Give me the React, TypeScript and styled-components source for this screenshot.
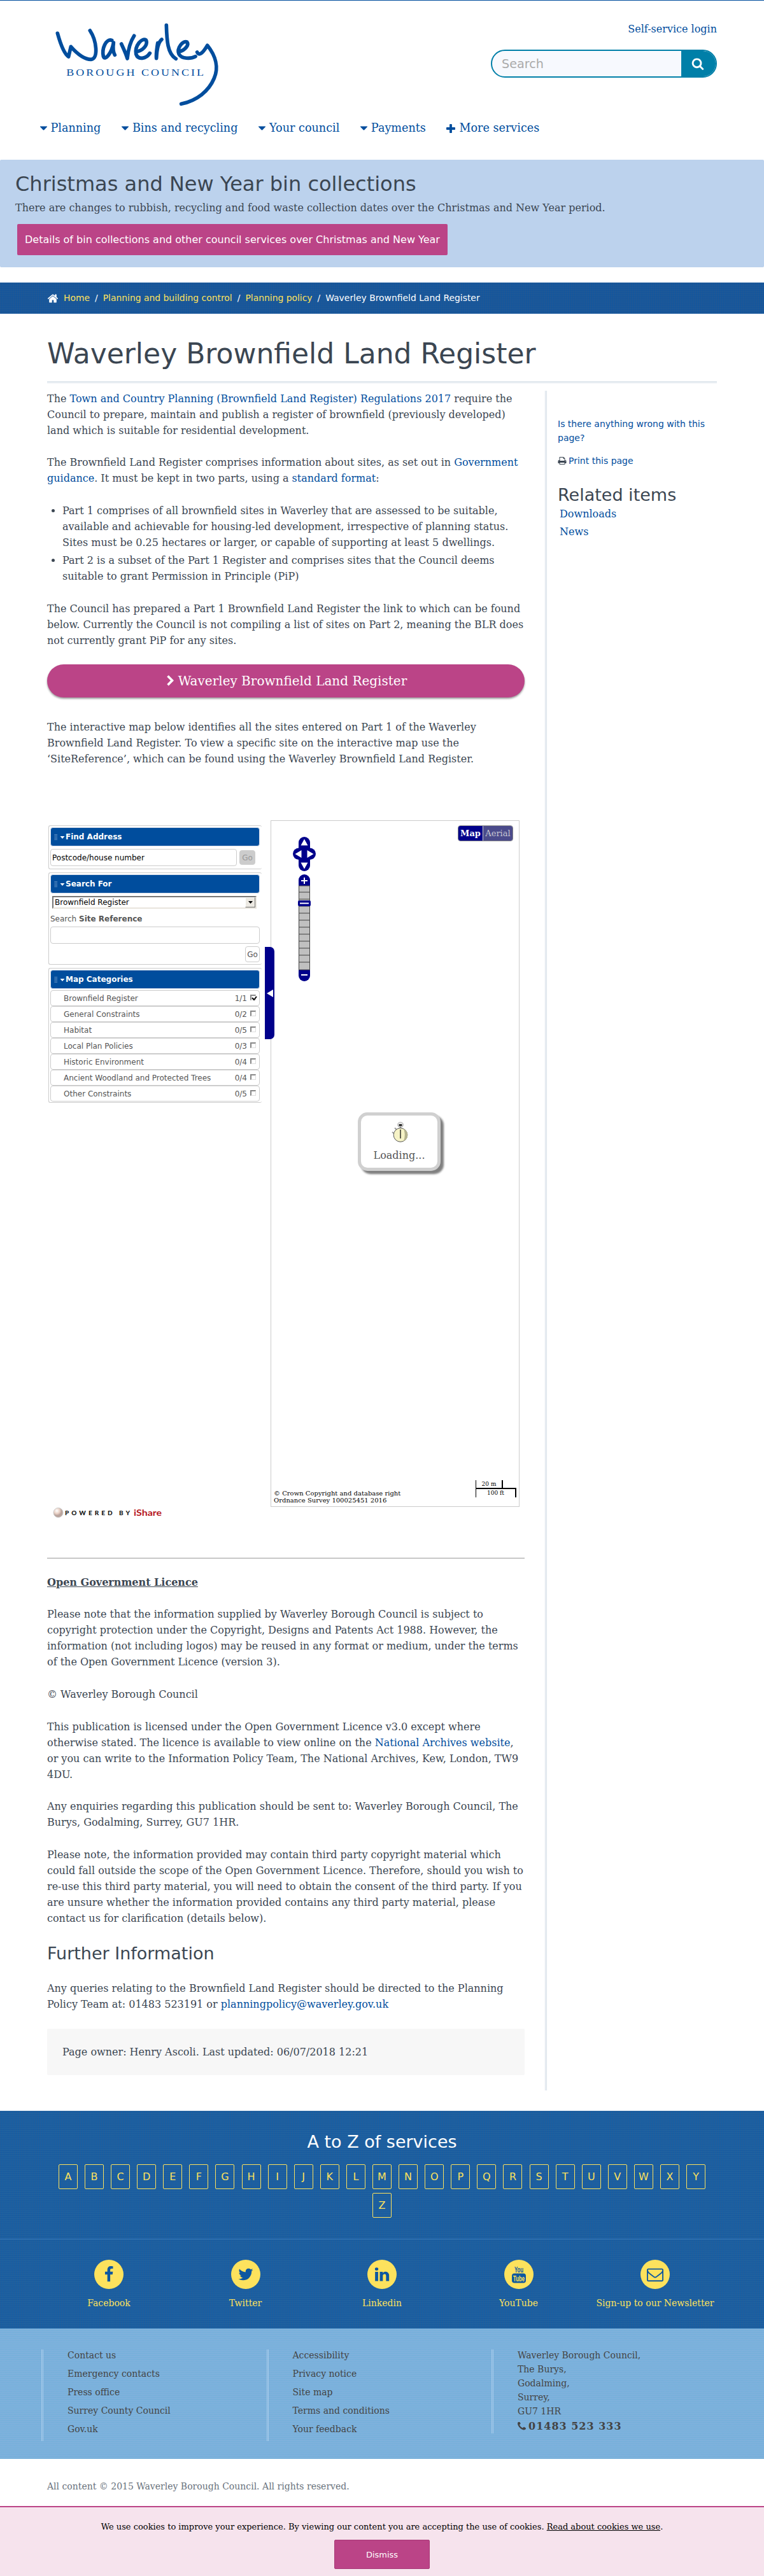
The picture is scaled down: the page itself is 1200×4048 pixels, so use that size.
import React from 'react';
import styled, { createGlobalStyle, css } from 'styled-components';

const serif = '"DejaVu Serif", "Liberation Serif", serif';
const sans = '"DejaVu Sans", "Liberation Sans", sans-serif';
const blue = '#004d9d';
const ink = '#3b4652';
const pink = '#bb4487';
const yellow = '#fde25d';

const Global = createGlobalStyle`
  *, *::before, *::after { box-sizing: border-box; }
  body { margin: 0; background: #fff; color: ${ink}; font: 16px/25px ${serif}; }
  a { color: ${blue}; text-decoration: none; }
  h1, h2, p, ul { margin: 0; padding: 0; font-weight: 400; }
`;

/* ---------- icons ---------- */

const ICONS = {
  caret: 'M1408 704q0 26-19 45l-448 448q-19 19-45 19t-45-19l-448-448q-19-19-19-45t19-45 45-19h896q26 0 45 19t19 45z',
  plus: 'M1600 736v192q0 40-28 68t-68 28h-416v416q0 40-28 68t-68 28h-192q-40 0-68-28t-28-68v-416h-416q-40 0-68-28t-28-68v-192q0-40 28-68t68-28h416v-416q0-40 28-68t68-28h192q40 0 68 28t28 68v416h416q40 0 68 28t28 68z',
  search: 'M1216 832q0-185-131.5-316.5t-316.5-131.5-316.5 131.5-131.5 316.5 131.5 316.5 316.5 131.5 316.5-131.5 131.5-316.5zm512 832q0 52-38 90t-90 38q-54 0-90-38l-343-342q-179 124-399 124-143 0-273.5-55.5t-225-150-150-225-55.5-273.5 55.5-273.5 150-225 225-150 273.5-55.5 273.5 55.5 225 150 150 225 55.5 273.5q0 220-124 399l343 343q37 37 37 90z',
  home: 'M1472 992v480q0 26-19 45t-45 19h-384v-384h-256v384h-384q-26 0-45-19t-19-45v-480q0-1 .5-3t.5-3l575-474 575 474q1 2 1 6zm223-69l-62 74q-8 9-21 11h-3q-13 0-21-7l-692-577-692 577q-12 8-24 7-13-2-21-11l-62-74q-8-10-7-23.5t11-21.5l719-599q32-26 76-26t76 26l244 204v-195q0-14 9-23t23-9h192q14 0 23 9t9 23v408l219 182q10 8 11 21.5t-7 23.5z',
  print: 'M448 1536h896v-256h-896v256zm0-640h896v-384h-160q-40 0-68-28t-28-68v-160h-640v640zm1152 64q0-26-19-45t-45-19-45 19-19 45 19 45 45 19 45-19 19-45zm128 0v416q0 13-9.5 22.5t-22.5 9.5h-224v160q0 40-28 68t-68 28h-960q-40 0-68-28t-28-68v-160h-224q-13 0-22.5-9.5t-9.5-22.5v-416q0-79 56.5-135.5t135.5-56.5h64v-544q0-40 28-68t68-28h672q40 0 88 20t76 48l152 152q28 28 48 76t20 88v256h64q79 0 135.5 56.5t56.5 135.5z',
  chevron: 'M1363 877l-742 742q-19 19-45 19t-45-19l-166-166q-19-19-19-45t19-45l531-531-531-531q-19-19-19-45t19-45l166-166q19-19 45-19t45 19l742 742q19 19 19 45t-19 45z',
  facebook: 'M1343 12v264h-157q-86 0-116 36t-30 108v189h293l-39 296h-254v759h-306v-759h-255v-296h255v-218q0-186 104-288.5t277-102.5q147 0 228 12z',
  twitter: 'M1684 408q-67 98-162 167 1 14 1 42 0 130-38 259.5t-115.5 248.5-184.5 210.5-258 146-323 54.5q-271 0-496-145 35 4 78 4 225 0 401-138-105-2-188-64.5t-114-159.5q33 5 61 5 43 0 85-11-112-23-185.5-111.5t-73.5-205.5v-4q68 38 146 41-66-44-105-115t-39-154q0-88 44-163 121 149 294.5 238.5t371.5 99.5q-8-38-8-74 0-134 94.5-228.5t228.5-94.5q140 0 236 102 109-21 205-78-37 115-142 178 93-10 186-50z',
  linkedin: 'M477 625v991h-330v-991h330zm21-306q1 73-50.5 122t-135.5 49h-2q-82 0-132-49t-50-122q0-74 51.5-122.5t134.5-48.5 133 48.5 51 122.5zm1166 729v568h-329v-530q0-105-40.5-164.5t-126.5-59.5q-63 0-105.5 34.5t-63.5 85.5q-11 30-11 81v553h-329q2-399 2-647t-1-296l-1-48h329v144h-2q20-32 41-56t56.5-52 87-43.5 114.5-15.5q171 0 275 113.5t104 332.5z',
  envelope: 'M1664 1504v-768q-32 36-69 66-268 206-426 338-51 43-83 67t-86.5 48.5-102.5 24.5h-2q-48 0-102.5-24.5t-86.5-48.5-83-67q-158-132-426-338-37-30-69-66v768q0 13 9.5 22.5t22.5 9.5h1472q13 0 22.5-9.5t9.5-22.5zm0-1051v-24.5l-.5-13-3-12.5-5.5-9-9-7.5-14-2.5h-1472q-13 0-22.5 9.5t-9.5 22.5q0 168 147 284 193 152 401 317 6 5 35 29.5t46 37.5 44.5 31.5 50.5 27.5 43 9h2q20 0 43-9t50.5-27.5 44.5-31.5 46-37.5 35-29.5q208-165 401-317 54-43 100.5-115.5t46.5-131.5zm128-37v1088q0 66-47 113t-113 47h-1472q-66 0-113-47t-47-113v-1088q0-66 47-113t113-47h1472q66 0 113 47t47 113z',
  phone: 'M1600 1240q0 27-10 70.5t-21 68.5q-21 50-122 106-94 51-186 51-27 0-53-3.5t-57.5-12.5-47-14.5-55.5-20.5-49-18q-98-35-175-83-127-79-264-216t-216-264q-48-77-83-175-3-9-18-49t-20.5-55.5-14.5-47-12.5-57.5-3.5-53q0-92 51-186 56-101 106-122 25-11 68.5-21t70.5-10q14 0 21 3 18 6 53 76 11 19 30 54t35 63.5 31 53.5q3 4 17.5 25t21.5 35.5 7 28.5q0 20-28.5 50t-62 55-62 53-28.5 46q0 9 5 22.5t8.5 20.5 14 24 11.5 19q76 137 174 235t235 174q2 1 19 11.5t24 14 20.5 8.5 22.5 5q18 0 46-28.5t53-62 55-62 50-28.5q14 0 28.5 7t35.5 21.5 25 17.5q25 15 53.5 31t63.5 35 54 30q70 35 76 53 3 7 3 21z',
};

const BOXES: Partial<Record<keyof typeof ICONS, string>> = {
  caret: '384 416 1024 1024',
  plus: '192 128 1408 1408',
  phone: '192 192 1408 1408',
};

function Icon({ name, size = 16 }: { name: keyof typeof ICONS; size?: number }) {
  return (
    <svg width={size} height={size} viewBox={BOXES[name] ?? '0 0 1792 1792'} fill="currentColor" aria-hidden>
      <path d={ICONS[name]} />
    </svg>
  );
}

/* ---------- header ---------- */

const Header = styled.header`
  height: 251px;
  border-top: 1px solid ${blue};
  display: flex;
  flex-direction: column;
`;
const HeaderTop = styled.div`
  height: 178px;
  padding: 32px 74px 0 83px;
  display: flex;
  justify-content: space-between;
`;
const HeaderTools = styled.div`
  display: flex;
  flex-direction: column;
  align-items: flex-end;
  gap: 20px;
`;
const SearchBox = styled.form`
  width: 355px;
  height: 44px;
  display: flex;
  border: 2px solid #007fa8;
  border-radius: 22px;
  overflow: hidden;
  background: #f7f9fe;
`;
const SearchInput = styled.input`
  flex: 1;
  min-width: 0;
  border: 0;
  background: transparent;
  padding: 0 0 0 15px;
  font: 19.2px ${sans};
  &::placeholder { color: #aaa; opacity: 1; }
`;
const SearchButton = styled.button`
  width: 54px;
  border: 0;
  padding: 0 3px 0 0;
  color: #fff;
  background: #007fa8;
  display: flex;
  align-items: center;
  justify-content: center;
`;
const Nav = styled.nav`
  display: flex;
  gap: 32.6px;
  padding-left: 62.5px;
  font-size: 17.6px;
  line-height: 45px;
`;
const NavLink = styled.a`
  display: flex;
  align-items: center;
  gap: 6px;
`;

/* ---------- notice and breadcrumb ---------- */

const Notice = styled.section`
  height: 169px;
  background: #bcd2ed;
  border-radius: 2px;
  padding: 19px 24px 0;
`;
const NoticeTitle = styled.h2`
  margin-bottom: 6px;
  font: 32px/38px ${sans};
`;
const NoticeButton = styled.a`
  display: inline-block;
  margin: 13px 0 0 3px;
  padding: 0 12px;
  border-radius: 2px;
  background: ${pink};
  color: #fff;
  font: 16px/49px ${sans};
`;
const weave = css`
  background-image:
    repeating-linear-gradient(0deg, rgba(0, 70, 160, 0.22) 0 1px, transparent 1px 3px),
    repeating-linear-gradient(90deg, rgba(90, 90, 110, 0.16) 0 1px, transparent 1px 3px);
`;
const Crumbs = styled.nav`
  height: 49px;
  margin-top: 24px;
  padding-left: 74px;
  display: flex;
  align-items: center;
  gap: 8px;
  color: #fff;
  background-color: #18589b;
  ${weave}
  font: 13.9px/25px ${sans};
  a { color: ${yellow}; }
`;

/* ---------- article ---------- */

const PageTitle = styled.h1`
  margin: 33px 74px 0;
  height: 76px;
  border-bottom: 3px double #d2dce6;
  font: 44px/60px ${sans};
`;
const Columns = styled.div`
  display: grid;
  grid-template-columns: 750px 1fr;
  column-gap: 32px;
  margin: 12px 74px 32px;
`;
const Article = styled.main`
  height: 2671px;
`;
const Para = styled.p<{ $gap?: number }>`
  margin-bottom: ${(p) => p.$gap ?? 25}px;
`;
const Bullets = styled.ul`
  margin: 26px 0;
  padding-left: 24px;
  li + li { margin-top: 3px; }
`;
const BigButton = styled.a`
  height: 52px;
  margin-bottom: 34px;
  border-radius: 26px;
  background: ${pink};
  box-shadow: 0 2px 3px rgba(0, 0, 0, 0.4);
  color: #fff;
  font-size: 20px;
  display: flex;
  align-items: center;
  justify-content: center;
  gap: 3px;
`;
const LicenceTitle = styled.p`
  font-weight: 700;
  text-decoration: underline;
  margin-bottom: 25px;
`;
const Rule = styled.hr`
  margin: 0 0 25px;
  border: 0;
  border-top: 1px solid #999;
`;
const SubTitle = styled.h2`
  font: 27px/34px ${sans};
  margin: 26px 0 25px;
`;
const Owner = styled.p`
  margin-top: 26px;
  padding: 0 24px;
  height: 73px;
  line-height: 73px;
  background: #f7f7f7;
  border-radius: 2px;
`;
const Side = styled.aside`
  border-left: 3px double #d2dce6;
  padding: 41px 0 0 17px;
`;
const SideNote = styled.p`
  font: 14px/22px ${sans};
  margin-bottom: 14px;
  svg { vertical-align: -2px; margin-right: 3px; }
`;
const SideTitle = styled.h2`
  font: 27px/32px ${sans};
  margin-top: 27px;
`;
const SideLinks = styled.div`
  display: flex;
  flex-direction: column;
  line-height: 28px;
  padding-left: 3px;
`;

/* ---------- map widget ---------- */

const MapWidget = styled.div`
  position: relative;
  display: grid;
  grid-template-columns: 335px 391px;
  column-gap: 14px;
  margin: 84px 0 0 2px;
  height: 1159px;
  font: 12px/14px ${sans};
  color: #555;
`;
const Tools = styled.div`
  display: flex;
  flex-direction: column;
  gap: 5px;
  padding-top: 8px;
`;
const Panel = styled.section<{ $h: number }>`
  height: ${(p) => p.$h}px;
  border: 1px solid #ccc;
  border-right: 0;
  border-radius: 3px;
  padding: 2px 3px 0 2px;
`;
const PanelHead = styled.div`
  height: 30px;
  border: 1px solid #d5dcea;
  border-radius: 4px;
  background: ${blue};
  color: #fff;
  font-weight: 700;
  display: flex;
  align-items: center;
  padding-left: 6px;
`;
const Line = styled.div<{ $top: number; $end?: boolean }>`
  display: flex;
  align-items: center;
  justify-content: ${(p) => (p.$end ? 'flex-end' : 'flex-start')};
  gap: 4px;
  margin-top: ${(p) => p.$top}px;
`;
const Field = styled.input<{ $w: number }>`
  width: ${(p) => p.$w}px;
  height: 27px;
  border: 1px solid #ccc;
  border-radius: 4px;
  padding: 0 2px;
  color: #000;
  font: 12px ${sans};
`;
const Go = styled.button<{ $off?: boolean }>`
  height: ${(p) => (p.$off ? 23 : 25)}px;
  width: ${(p) => (p.$off ? 25 : 23)}px;
  padding: 0;
  border: 1px solid #ccc;
  border-radius: 4px;
  background: ${(p) => (p.$off ? '#ccc' : '#fff')};
  color: ${(p) => (p.$off ? '#999' : '#555')};
  font: 12px ${sans};
`;
const SelectBox = styled.div`
  width: 321px;
  height: 20px;
  margin: 4px 0 0 3px;
  border: 2px solid;
  border-color: #777 #e8e4dc #e8e4dc #777;
  display: flex;
  align-items: center;
  justify-content: space-between;
  padding-left: 2px;
  color: #000;
`;
const SelectArrow = styled.span`
  width: 16px;
  height: 16px;
  background: #ece9e2;
  border: 1px solid;
  border-color: #fff #777 #777 #fff;
  display: flex;
  align-items: center;
  justify-content: center;
`;
const Category = styled.div`
  height: 25px;
  border: 1px solid #ccc;
  border-radius: 4px;
  display: flex;
  align-items: center;
  padding: 0 5px 0 20px;
  span:first-child { flex: 1; }
`;
const Check = styled.span`
  width: 9px;
  height: 9px;
  margin: -2px 0 0 5px;
  border: 2px solid;
  border-color: #888 #ddd #ddd #888;
  border-right-width: 1px;
  border-bottom-width: 1px;
  svg { display: block; overflow: visible; }
`;
const MapPane = styled.div`
  position: relative;
  width: 391px;
  height: 1079px;
  border: 1px solid #ccc;
`;
const Handle = styled.div`
  position: absolute;
  left: 340px;
  top: 199px;
  width: 15px;
  height: 145px;
  border-radius: 0 7px 7px 0;
  background: #00008b;
  display: flex;
  align-items: center;
  justify-content: center;
`;
const Layers = styled.div`
  position: absolute;
  top: 7px;
  right: 9px;
  display: flex;
  border: 1px solid #888;
  border-radius: 4px;
  overflow: hidden;
  font: 13px/23px ${serif};
`;
const Layer = styled.span<{ $on?: boolean }>`
  width: ${(p) => (p.$on ? 38 : 47)}px;
  text-align: center;
  background: ${(p) => (p.$on ? '#00008b' : '#4b4b8b')};
  color: ${(p) => (p.$on ? '#fff' : '#c8c8d4')};
  font-weight: ${(p) => (p.$on ? 700 : 400)};
  & + & { border-left: 1px solid #ccc; }
`;
const Controls = styled.svg`
  position: absolute;
  left: 33px;
  top: 24px;
`;
const Loading = styled.div`
  position: absolute;
  left: 136px;
  top: 458px;
  width: 130px;
  height: 92px;
  border: 5px solid #d0d0d0;
  border-radius: 15px;
  background: #fff;
  box-shadow: 5px 5px 3px #808080;
  display: flex;
  flex-direction: column;
  align-items: center;
  padding-top: 10px;
  gap: 8px;
  font: 16px/25px ${serif};
`;
const Credit = styled.p`
  position: absolute;
  left: 4px;
  bottom: 4px;
  font: 10px/11px ${serif};
  color: #000;
`;
const Scale = styled.div`
  position: absolute;
  right: 4px;
  bottom: 14px;
  width: 64px;
  font: 9px/12px ${serif};
  color: #000;
  text-align: center;
`;
const ScaleTop = styled.div`
  width: 43px;
  height: 12px;
  border: solid #000;
  border-width: 0 2px 0 1px;
`;
const ScaleBottom = styled.div`
  height: 15px;
  border: solid #000;
  border-width: 2px 2px 0 1px;
`;
const Powered = styled.div`
  position: absolute;
  left: 6px;
  top: 1079px;
`;

/* ---------- footer ---------- */

const Band = styled.section<{ $h: number }>`
  height: ${(p) => p.$h}px;
  background-color: #1c61a2;
  ${weave}
`;
const AZTitle = styled.h2`
  color: #fff;
  text-align: center;
  font: 27px/36px ${sans};
  padding-top: 31px;
`;
const Letters = styled.div`
  width: 1030px;
  margin: 17px auto 0;
  display: flex;
  flex-wrap: wrap;
  justify-content: center;
  gap: 6px 11.1px;
`;
const Letter = styled.a`
  width: 30px;
  height: 39px;
  border: 1px solid ${yellow};
  border-radius: 2px;
  color: ${yellow};
  text-align: center;
  font: 16px/37px ${sans};
`;
const Socials = styled(Band)`
  border-top: 1px solid #3a7dbd;
  display: grid;
  grid-template-columns: repeat(5, 214.5px);
  justify-content: center;
  padding-top: 32px;
  font-size: 14px;
`;
const Social = styled.a`
  display: flex;
  flex-direction: column;
  align-items: center;
  gap: 10px;
  color: ${yellow};
`;
const Disc = styled.span`
  width: 46px;
  height: 46px;
  border-radius: 50%;
  background: ${yellow};
  color: #0d57a0;
  display: flex;
  align-items: center;
  justify-content: center;
`;
const FooterLinks = styled.footer`
  height: 205px;
  background-color: #7fb1dc;
  background-image: repeating-linear-gradient(0deg, rgba(90, 175, 215, 0.3) 0 1px, transparent 1px 3px);
  padding: 33px 0 0 65px;
  display: grid;
  grid-template-columns: repeat(3, 353.5px);
  align-items: start;
  font-size: 14px;
`;
const FooterCol = styled.div<{ $h: number; $lh: number; $lift: number }>`
  height: ${(p) => p.$h}px;
  border-left: 3px double #a9cdec;
  padding-left: 38px;
  line-height: ${(p) => p.$lh}px;
  display: flex;
  flex-direction: column;
  color: #444;
  a { color: #444; }
  > :first-child { margin-top: -${(p) => p.$lift}px; }
`;
const Phone = styled.strong`
  display: flex;
  align-items: center;
  gap: 4px;
  font-size: 16px;
  letter-spacing: 1px;
  line-height: 25px;
`;
const Legal = styled.p`
  height: 74px;
  padding: 31px 74px 0;
  font-size: 14px;
  color: #69727c;
`;
const Cookies = styled.section`
  height: 110px;
  border-top: 2px solid ${pink};
  background: #f6e3ed;
  color: #000;
  display: flex;
  flex-direction: column;
  align-items: center;
  padding-top: 18px;
  gap: 8px;
  font-size: 13px;
  a { color: #000; text-decoration: underline; }
`;
const Dismiss = styled.button`
  width: 150px;
  height: 46px;
  border: 1px solid #a93a77;
  border-radius: 2px;
  background: ${pink};
  color: #fff;
  font: 13px ${sans};
`;

function Logo() {
  return (
    <svg width="264" height="137" viewBox="40 40 792 411" role="img" aria-label="Waverley">
      <g fill="none" stroke={blue} strokeWidth="17" strokeLinecap="round" strokeLinejoin="round">
        <path d="M62 98C75 145 92 195 114 208L125 161C155 195 190 221 220 221C256 217 246 132 215 85" />
        <path d="M318 131C290 122 270 170 278 207C286 230 318 190 326 142C322 170 325 188 332 200" />
        <path d="M363 148C374 172 385 195 391 217C395 175 405 138 423 110" />
        <path d="M442 183C474 172 488 146 479 130C460 118 425 155 432 196C442 226 480 218 497 192" />
        <path d="M534 144C530 168 526 195 528 216C530 175 537 140 553 127" />
        <path d="M575 60C577 130 580 195 620 218" />
        <path d="M636 185C667 175 682 152 672 139C655 130 622 166 634 196C646 219 690 219 712 207" />
        <path d="M720 187C728 203 742 199 768 155C808 205 822 260 800 310C775 370 720 415 645 431" />
      </g>
      <text x="104" y="299" fontSize="42" letterSpacing="7" textLength="656" lengthAdjust="spacingAndGlyphs" fill={blue} fontFamily='"Liberation Serif", serif'>
        BOROUGH COUNCIL
      </text>
    </svg>
  );
}

function MapControls() {
  const slots = Array.from({ length: 11 }, (_, i) => 87 + i * 11);
  return (
    <Controls width="40" height="232" viewBox="0 0 40 232">
      <rect x="10" y="1" width="18" height="54" rx="9" fill="#00008b" />
      <rect x="1" y="18.500" width="36" height="18.500" rx="9.200" fill="#00008b" />
      <path d="M19 4.500l5.500 10h-11zM19 51.500l5.500-10h-11zM4.500 28l10-6v12zM33.500 28l-10-6v12z" fill="#fff" />
      <rect x="10" y="60" width="18" height="30" rx="9" fill="#00008b" />
      <rect x="10" y="198" width="18" height="30" rx="9" fill="#00008b" />
      <rect x="10.500" y="78" width="17" height="132" fill="#c0c0c0" stroke="#444" />
      {slots.map((y) => (
        <rect key={y} x="11" y={y} width="16" height="2" fill="#808080" />
      ))}
      <path d="M14 70h10M19 65v10M14 218h10" stroke="#fff" strokeWidth="2" />
      <rect x="9" y="101" width="20" height="9" rx="2" fill="#00008b" />
      <rect x="12" y="104.500" width="14" height="2" fill="#fff" />
    </Controls>
  );
}

function Stopwatch() {
  return (
    <svg width="27" height="32" viewBox="0 0 27 32">
      <ellipse cx="15" cy="4.500" rx="4.200" ry="3.800" fill="none" stroke="#999" />
      <rect x="12.500" y="3.500" width="5" height="3" fill="#111" />
      <path d="M15 6v4M2 16l4 3M6 9.500l4 3.500" stroke="#999" strokeWidth="2" />
      <circle cx="15" cy="20.500" r="10.800" fill="#f6f3c6" stroke="#555" strokeWidth="1" />
      <path d="M20 11a10.300 10.300 0 0 1 0 19q3.500-9.500 0-19z" fill="#b5b38e" />
      <path d="M15 12v14" stroke="#111" strokeWidth="1.300" />
    </svg>
  );
}

function PanelTitle({ children }: { children: React.ReactNode }) {
  return (
    <PanelHead>
      <svg width="17" height="11" viewBox="0 0 17 11">
        <path d="M.5 1v10M3 1v10" stroke="#cfdcef" strokeDasharray="1 1" />
        <path d="M8.500 4h7l-3.500 4z" fill="#fff" />
      </svg>
      {children}
    </PanelHead>
  );
}

const categories: [string, string][] = [
  ['Brownfield Register', '1/1'],
  ['General Constraints', '0/2'],
  ['Habitat', '0/5'],
  ['Local Plan Policies', '0/3'],
  ['Historic Environment', '0/4'],
  ['Ancient Woodland and Protected Trees', '0/4'],
  ['Other Constraints', '0/5'],
];

function BrownfieldMap() {
  return (
    <MapWidget>
      <Tools>
        <Panel $h={69}>
          <PanelTitle>Find Address</PanelTitle>
          <Line $top={4}>
            <Field $w={293} defaultValue="Postcode/house number" />
            <Go $off>Go</Go>
          </Line>
        </Panel>
        <Panel $h={145}>
          <PanelTitle>Search For</PanelTitle>
          <SelectBox>
            Brownfield Register
            <SelectArrow>
              <svg width="7" height="4" viewBox="0 0 7 4"><path d="M0 0h7L3.500 4z" /></svg>
            </SelectArrow>
          </SelectBox>
          <Line $top={9}>
            <span>Search <b>Site Reference</b></span>
          </Line>
          <Line $top={5}>
            <Field $w={329} />
          </Line>
          <Line $top={4} $end>
            <Go>Go</Go>
          </Line>
        </Panel>
        <Panel $h={212}>
          <PanelTitle>Map Categories</PanelTitle>
          <Line $top={2} />
          {categories.map(([name, count], i) => (
            <Category key={name}>
              <span>{name}</span>
              <span>{count}</span>
              <Check>
                {i === 0 && (
                  <svg width="9" height="9" viewBox="0 0 9 9">
                    <path d="M1 3l3 3 4-5" fill="none" stroke="#000" strokeWidth="2" />
                  </svg>
                )}
              </Check>
            </Category>
          ))}
        </Panel>
      </Tools>
      <MapPane>
        <MapControls />
        <Layers>
          <Layer $on>Map</Layer>
          <Layer>Aerial</Layer>
        </Layers>
        <Loading>
          <Stopwatch />
          Loading...
        </Loading>
        <Credit>
          © Crown Copyright and database right
          <br />
          Ordnance Survey 100025451 2016
        </Credit>
        <Scale>
          <ScaleTop>20 m</ScaleTop>
          <ScaleBottom>100 ft</ScaleBottom>
        </Scale>
      </MapPane>
      <Handle>
        <svg width="10" height="12" viewBox="0 0 10 12"><path d="M0 6L10 0v12z" fill="#fff" /></svg>
      </Handle>
      <Powered>
        <svg width="178" height="20" viewBox="0 0 178 20">
          <defs>
            <radialGradient id="ball" cx="0.350" cy="0.300">
              <stop offset="0" stopColor="#fff" />
              <stop offset="0.600" stopColor="#ead2c6" />
              <stop offset="1" stopColor="#b9a39c" />
            </radialGradient>
          </defs>
          <circle cx="9.500" cy="9" r="7.500" fill="url(#ball)" stroke="#ccc" />
          <text x="20" y="13" fontSize="10" fontWeight="900" fill="#111" textLength="102" fontFamily="Lato, sans-serif">POWERED BY</text>
          <text x="128" y="13.500" fontSize="14" fontWeight="700" fill="#b5161c" textLength="44" lengthAdjust="spacingAndGlyphs" fontFamily="Lato, sans-serif">iShare</text>
        </svg>
      </Powered>
    </MapWidget>
  );
}

function YouTubeMark() {
  return (
    <svg width="34" height="40" viewBox="-5 -5 34 40" overflow="visible" fontFamily='"Liberation Sans", sans-serif' fontWeight="700">
      <text x="5" y="12" fontSize="12" textLength="14" lengthAdjust="spacingAndGlyphs" fill="currentColor">You</text>
      <rect x="1" y="13.500" width="22" height="15" rx="4" fill="currentColor" />
      <text x="3" y="25.500" fontSize="12.500" textLength="18" lengthAdjust="spacingAndGlyphs" fill={yellow}>Tube</text>
    </svg>
  );
}

export default function App() {
  return (
    <>
      <Global />
      <Header>
        <HeaderTop>
          <Logo />
          <HeaderTools>
            <a href="#login">Self-service login</a>
            <SearchBox>
              <SearchInput placeholder="Search" />
              <SearchButton type="button" aria-label="Search">
                <Icon name="search" size={20} />
              </SearchButton>
            </SearchBox>
          </HeaderTools>
        </HeaderTop>
        <Nav>
          {['Planning', 'Bins and recycling', 'Your council', 'Payments'].map((t) => (
            <NavLink href="#nav" key={t}><Icon name="caret" size={11} />{t}</NavLink>
          ))}
          <NavLink href="#more"><Icon name="plus" size={14} />More services</NavLink>
        </Nav>
      </Header>

      <Notice>
        <NoticeTitle>Christmas and New Year bin collections</NoticeTitle>
        <p>There are changes to rubbish, recycling and food waste collection dates over the Christmas and New Year period.</p>
        <NoticeButton href="#bins">Details of bin collections and other council services over Christmas and New Year</NoticeButton>
      </Notice>

      <Crumbs>
        <Icon name="home" size={18} />
        <a href="#home">Home</a>/<a href="#control">Planning and building control</a>/
        <a href="#policy">Planning policy</a>/<span>Waverley Brownfield Land Register</span>
      </Crumbs>

      <PageTitle>Waverley Brownfield Land Register</PageTitle>
      <Columns>
        <Article>
          <Para>
            The <a href="#regs">Town and Country Planning (Brownfield Land Register) Regulations 2017</a> require the
            Council to prepare, maintain and publish a register of brownfield (previously developed) land which is
            suitable for residential development.
          </Para>
          <Para>
            The Brownfield Land Register comprises information about sites, as set out in{' '}
            <a href="#guidance">Government guidance</a>. It must be kept in two parts, using a{' '}
            <a href="#format">standard format</a>:
          </Para>
          <Bullets>
            <li>
              Part 1 comprises of all brownfield sites in Waverley that are assessed to be suitable, available and
              achievable for housing-led development, irrespective of planning status. Sites must be 0.25 hectares or
              larger, or capable of supporting at least 5 dwellings.
            </li>
            <li>
              Part 2 is a subset of the Part 1 Register and comprises sites that the Council deems suitable to grant
              Permission in Principle (PiP)
            </li>
          </Bullets>
          <Para>
            The Council has prepared a Part 1 Brownfield Land Register the link to which can be found below. Currently
            the Council is not compiling a list of sites on Part 2, meaning the BLR does not currently grant PiP for
            any sites.
          </Para>
          <BigButton href="#register"><Icon name="chevron" size={18} />Waverley Brownfield Land Register</BigButton>
          <Para $gap={0}>
            The interactive map below identifies all the sites entered on Part 1 of the Waverley Brownfield Land
            Register. To view a specific site on the interactive map use the ‘SiteReference’, which can be found using
            the Waverley Brownfield Land Register.
          </Para>
          <BrownfieldMap />
          <Rule />
          <LicenceTitle>Open Government Licence</LicenceTitle>
          <Para $gap={26}>
            Please note that the information supplied by Waverley Borough Council is subject to copyright protection
            under the Copyright, Designs and Patents Act 1988. However, the information (not including logos) may be
            reused in any format or medium, under the terms of the Open Government Licence (version 3).
          </Para>
          <Para $gap={26}>© Waverley Borough Council</Para>
          <Para>
            This publication is licensed under the Open Government Licence v3.0 except where otherwise stated. The
            licence is available to view online on the <a href="#archives">National Archives website</a>, or you can
            write to the Information Policy Team, The National Archives, Kew, London, TW9 4DU.
          </Para>
          <Para $gap={26}>
            Any enquiries regarding this publication should be sent to: Waverley Borough Council, The Burys,
            Godalming, Surrey, GU7 1HR.
          </Para>
          <Para>
            Please note, the information provided may contain third party copyright material which could fall outside
            the scope of the Open Government Licence. Therefore, should you wish to re-use this third party material,
            you will need to obtain the consent of the third party. If you are unsure whether the information provided
            contains any third party material, please contact us for clarification (details below).
          </Para>
          <SubTitle>Further Information</SubTitle>
          <Para>
            Any queries relating to the Brownfield Land Register should be directed to the Planning Policy Team at:
            01483 523191 or <a href="#mail">planningpolicy@waverley.gov.uk</a>
          </Para>
          <Owner>Page owner: Henry Ascoli. Last updated: 06/07/2018 12:21</Owner>
        </Article>
        <Side>
          <SideNote><a href="#wrong">Is there anything wrong with this page?</a></SideNote>
          <SideNote><Icon name="print" size={14} /><a href="#print">Print this page</a></SideNote>
          <SideTitle>Related items</SideTitle>
          <SideLinks>
            <a href="#downloads">Downloads</a>
            <a href="#news">News</a>
          </SideLinks>
        </Side>
      </Columns>

      <Band $h={201}>
        <AZTitle>A to Z of services</AZTitle>
        <Letters>
          {'ABCDEFGHIJKLMNOPQRSTUVWXYZ'.split('').map((l) => (
            <Letter href="#az" key={l}>{l}</Letter>
          ))}
        </Letters>
      </Band>
      <Socials $h={141}>
        <Social href="#fb"><Disc><Icon name="facebook" size={26} /></Disc>Facebook</Social>
        <Social href="#tw"><Disc><Icon name="twitter" size={26} /></Disc>Twitter</Social>
        <Social href="#li"><Disc><Icon name="linkedin" size={26} /></Disc>Linkedin</Social>
        <Social href="#yt"><Disc><YouTubeMark /></Disc>YouTube</Social>
        <Social href="#nl"><Disc><Icon name="envelope" size={26} /></Disc>Sign-up to our Newsletter</Social>
      </Socials>
      <FooterLinks>
        <FooterCol $h={144} $lh={29} $lift={5}>
          {['Contact us', 'Emergency contacts', 'Press office', 'Surrey County Council', 'Gov.uk'].map((t) => (
            <a href="#f" key={t}>{t}</a>
          ))}
        </FooterCol>
        <FooterCol $h={144} $lh={29} $lift={5}>
          {['Accessibility', 'Privacy notice', 'Site map', 'Terms and conditions', 'Your feedback'].map((t) => (
            <a href="#f" key={t}>{t}</a>
          ))}
        </FooterCol>
        <FooterCol $h={132} $lh={22} $lift={2}>
          <span>Waverley Borough Council,</span>
          <span>The Burys,</span>
          <span>Godalming,</span>
          <span>Surrey,</span>
          <span>GU7 1HR</span>
          <Phone><Icon name="phone" size={13} />01483 523 333</Phone>
        </FooterCol>
      </FooterLinks>
      <Legal>All content © 2015 Waverley Borough Council. All rights reserved.</Legal>
      <Cookies>
        <p>
          We use cookies to improve your experience. By viewing our content you are accepting the use of cookies.{' '}
          <a href="#cookies">Read about cookies we use</a>.
        </p>
        <Dismiss>Dismiss</Dismiss>
      </Cookies>
    </>
  );
}
